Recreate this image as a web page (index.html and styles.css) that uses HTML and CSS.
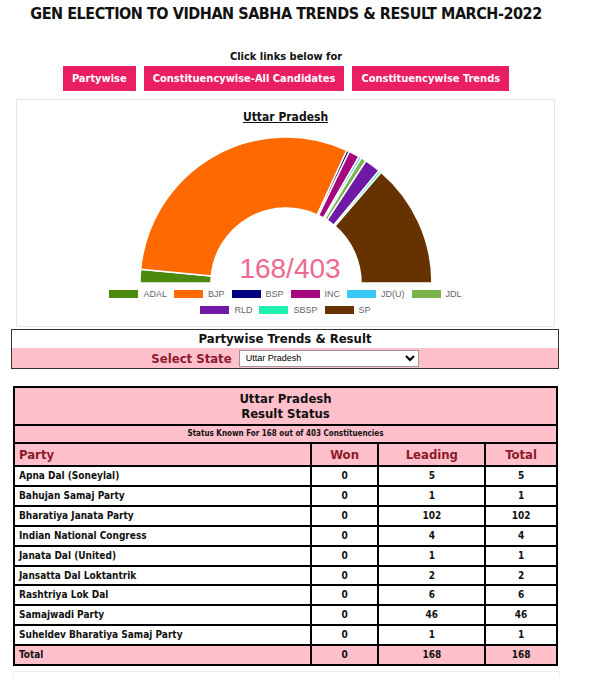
FILE: index.html
```html
<!DOCTYPE html>
<html lang="en">
<head>
    <meta charset="UTF-8">
    <title>Vidhan Sabha Trends &amp; Result March-2022</title>
    <link rel="stylesheet" href="styles.css">
</head>
<body>
    <div class="page">
        <h1 class="title">GEN ELECTION TO VIDHAN SABHA TRENDS &amp; RESULT MARCH-2022</h1>
        <p class="links-label">Click links below for</p>
        <div class="links">
            <a class="link-btn" href="#">Partywise</a>
            <a class="link-btn" href="#">Constituencywise-All Candidates</a>
            <a class="link-btn" href="#">Constituencywise Trends</a>
        </div>

        <div class="chart-box">
            <div class="chart-title">Uttar Pradesh</div>
            <svg class="donut" width="296" height="147" viewBox="0 0 296 147">
                <g id="segments"></g>
                <text class="donut-label" x="152" y="141" text-anchor="middle">168/403</text>
            </svg>
            <div class="legend">
                <div class="legend-row">
                    <span class="legend-item"><i class="swatch sw-adal"></i>ADAL</span>
                    <span class="legend-item"><i class="swatch sw-bjp"></i>BJP</span>
                    <span class="legend-item"><i class="swatch sw-bsp"></i>BSP</span>
                    <span class="legend-item"><i class="swatch sw-inc"></i>INC</span>
                    <span class="legend-item"><i class="swatch sw-jdu"></i>JD(U)</span>
                    <span class="legend-item"><i class="swatch sw-jdl"></i>JDL</span>
                </div>
                <div class="legend-row">
                    <span class="legend-item"><i class="swatch sw-rld"></i>RLD</span>
                    <span class="legend-item"><i class="swatch sw-sbsp"></i>SBSP</span>
                    <span class="legend-item"><i class="swatch sw-sp"></i>SP</span>
                </div>
            </div>
        </div>

        <div class="state-box">
            <div class="state-head">Partywise Trends &amp; Result</div>
            <div class="state-row">
                <label class="state-label" for="state">Select State</label>
                <select id="state" class="state-select">
                    <option>Uttar Pradesh</option>
                </select>
            </div>
        </div>

        <table class="result">
            <tr>
                <th colspan="4" class="result-head">Uttar Pradesh<br>Result Status</th>
            </tr>
            <tr>
                <td colspan="4" class="result-note">Status Known For 168 out of 403 Constituencies</td>
            </tr>
            <tr class="col-head">
                <th class="party">Party</th>
                <th class="col-won">Won</th>
                <th class="col-lead">Leading</th>
                <th class="col-total">Total</th>
            </tr>
            <tr><td class="party">Apna Dal (Soneylal)</td><td>0</td><td>5</td><td>5</td></tr>
            <tr><td class="party">Bahujan Samaj Party</td><td>0</td><td>1</td><td>1</td></tr>
            <tr><td class="party">Bharatiya Janata Party</td><td>0</td><td>102</td><td>102</td></tr>
            <tr><td class="party">Indian National Congress</td><td>0</td><td>4</td><td>4</td></tr>
            <tr><td class="party">Janata Dal (United)</td><td>0</td><td>1</td><td>1</td></tr>
            <tr><td class="party">Jansatta Dal Loktantrik</td><td>0</td><td>2</td><td>2</td></tr>
            <tr><td class="party">Rashtriya Lok Dal</td><td>0</td><td>6</td><td>6</td></tr>
            <tr><td class="party">Samajwadi Party</td><td>0</td><td>46</td><td>46</td></tr>
            <tr><td class="party">Suheldev Bharatiya Samaj Party</td><td>0</td><td>1</td><td>1</td></tr>
            <tr class="total-row"><td class="party">Total</td><td>0</td><td>168</td><td>168</td></tr>
        </table>

        <div class="next-box"></div>
    </div>

    <script>
        // Seats per party, in the order the chart draws them
        const parties = [
            { name: 'ADAL', seats: 5, color: '#4b8a0c' },
            { name: 'BJP', seats: 102, color: '#ff6a00' },
            { name: 'BSP', seats: 1, color: '#000080' },
            { name: 'INC', seats: 4, color: '#a5077f' },
            { name: 'JD(U)', seats: 1, color: '#36c9f5' },
            { name: 'JDL', seats: 2, color: '#7ab24c' },
            { name: 'RLD', seats: 6, color: '#7019a6' },
            { name: 'SBSP', seats: 1, color: '#1ef0b0' },
            { name: 'SP', seats: 46, color: '#663300' }
        ];

        const cx = 148, cy = 146, R = 146, r = 75;
        const total = parties.reduce((sum, p) => sum + p.seats, 0);
        const group = document.getElementById('segments');

        function point(radius, angle) {
            return [
                (cx + radius * Math.cos(angle)).toFixed(2),
                (cy - radius * Math.sin(angle)).toFixed(2)
            ];
        }

        let start = Math.PI;
        parties.forEach(p => {
            const end = start - Math.PI * p.seats / total;
            const a = point(R, start), b = point(R, end);
            const c = point(r, end), d = point(r, start);
            const path = document.createElementNS('http://www.w3.org/2000/svg', 'path');
            path.setAttribute('d',
                `M${a[0]} ${a[1]} A${R} ${R} 0 0 1 ${b[0]} ${b[1]} ` +
                `L${c[0]} ${c[1]} A${r} ${r} 0 0 0 ${d[0]} ${d[1]} Z`);
            path.setAttribute('fill', p.color);
            path.setAttribute('class', 'segment');
            group.appendChild(path);
            start = end;
        });
    </script>
</body>
</html>
```

FILE: styles.css
```css
body {
    margin: 0;
    font-family: "DejaVu Sans Condensed", "DejaVu Sans", sans-serif;
    color: #111;
    background: #fff;
}

.page {
    width: 572px;
}

.title {
    margin: 0;
    padding-top: 4px;
    font-size: 16px;
    line-height: 20px;
    letter-spacing: -0.45px;
    font-weight: bold;
    text-align: center;
}

.links-label {
    margin: 26px 0 0;
    font-size: 11px;
    line-height: 14px;
    font-weight: bold;
    text-align: center;
}

.links {
    display: flex;
    justify-content: center;
    gap: 8px;
    margin-top: 2px;
}

.link-btn {
    display: block;
    padding: 0 9px;
    height: 25px;
    line-height: 25px;
    background: #e91e63;
    color: #fff;
    font-size: 11px;
    font-weight: bold;
    text-decoration: none;
}

.chart-box {
    margin: 8px 0 0 16px;
    width: 537px;
    padding: 9px 0 8px;
    border: 1px solid #e6e6e6;
    display: flex;
    flex-direction: column;
    align-items: center;
}

.chart-title {
    font-size: 12px;
    line-height: 16px;
    font-weight: bold;
    text-decoration: underline;
}

.donut {
    display: block;
    margin-top: 12px;
}

.segment {
    stroke: #fff;
    stroke-width: 1.5;
}

.donut-label {
    font-family: "Liberation Sans", Arial, sans-serif;
    font-size: 28px;
    fill: #f0688f;
}

.legend {
    margin-top: 2px;
    font-family: "Liberation Sans", Arial, sans-serif;
    font-size: 9px;
    color: #666;
}

.legend-row {
    display: flex;
    justify-content: center;
    gap: 7px;
    height: 16px;
    align-items: center;
}

.legend-item {
    display: flex;
    align-items: center;
    gap: 5px;
}

.swatch {
    display: block;
    width: 29px;
    height: 8px;
}

.sw-adal { background: #4b8a0c; }
.sw-bjp { background: #ff6a00; }
.sw-bsp { background: #000080; }
.sw-inc { background: #a5077f; }
.sw-jdu { background: #36c9f5; }
.sw-jdl { background: #7ab24c; }
.sw-rld { background: #7019a6; }
.sw-sbsp { background: #1ef0b0; }
.sw-sp { background: #663300; }

.state-box {
    margin: 2px 0 0 11px;
    width: 546px;
    border: 1.5px solid #333;
}

.state-head {
    font-size: 13px;
    line-height: 18px;
    font-weight: bold;
    text-align: center;
}

.state-row {
    display: flex;
    justify-content: center;
    align-items: center;
    gap: 7px;
    height: 20px;
    background: #ffc0cb;
}

.state-label {
    font-size: 13px;
    font-weight: bold;
    color: #8b1a2b;
}

.state-select {
    width: 180px;
    height: 17px;
    padding: 0 2px;
    font-family: "Liberation Sans", Arial, sans-serif;
    font-size: 9px;
    border: 1px solid #999;
    background: #fff;
}

.result {
    margin: 17px 0 0 13px;
    width: 545px;
    border-collapse: collapse;
    border: 2px solid #000;
    font-size: 10px;
    font-weight: bold;
}

.result th,
.result td {
    border: 2px solid #000;
    padding: 0;
    text-align: center;
    line-height: 17.9px;
}

.result .result-head {
    background: #ffc0cb;
    font-size: 13px;
    line-height: 15px;
    padding: 3px 0;
}

.result .result-note {
    background: #ffc0cb;
    font-size: 8px;
    line-height: 16px;
}

.result .col-head th {
    background: #ffc0cb;
    color: #8b1a2b;
    font-size: 13px;
    line-height: 21px;
}

.result .party {
    text-align: left;
    padding-left: 4px;
    width: 292px;
}

.col-won { width: 66px; }
.col-lead { width: 105px; }
.col-total { width: 70px; }

.total-row td {
    background: #ffc0cb;
}

.next-box {
    margin: 5px 0 0 13px;
    width: 545px;
    height: 6px;
    border: 1px solid #eee;
    border-bottom: none;
}
```
